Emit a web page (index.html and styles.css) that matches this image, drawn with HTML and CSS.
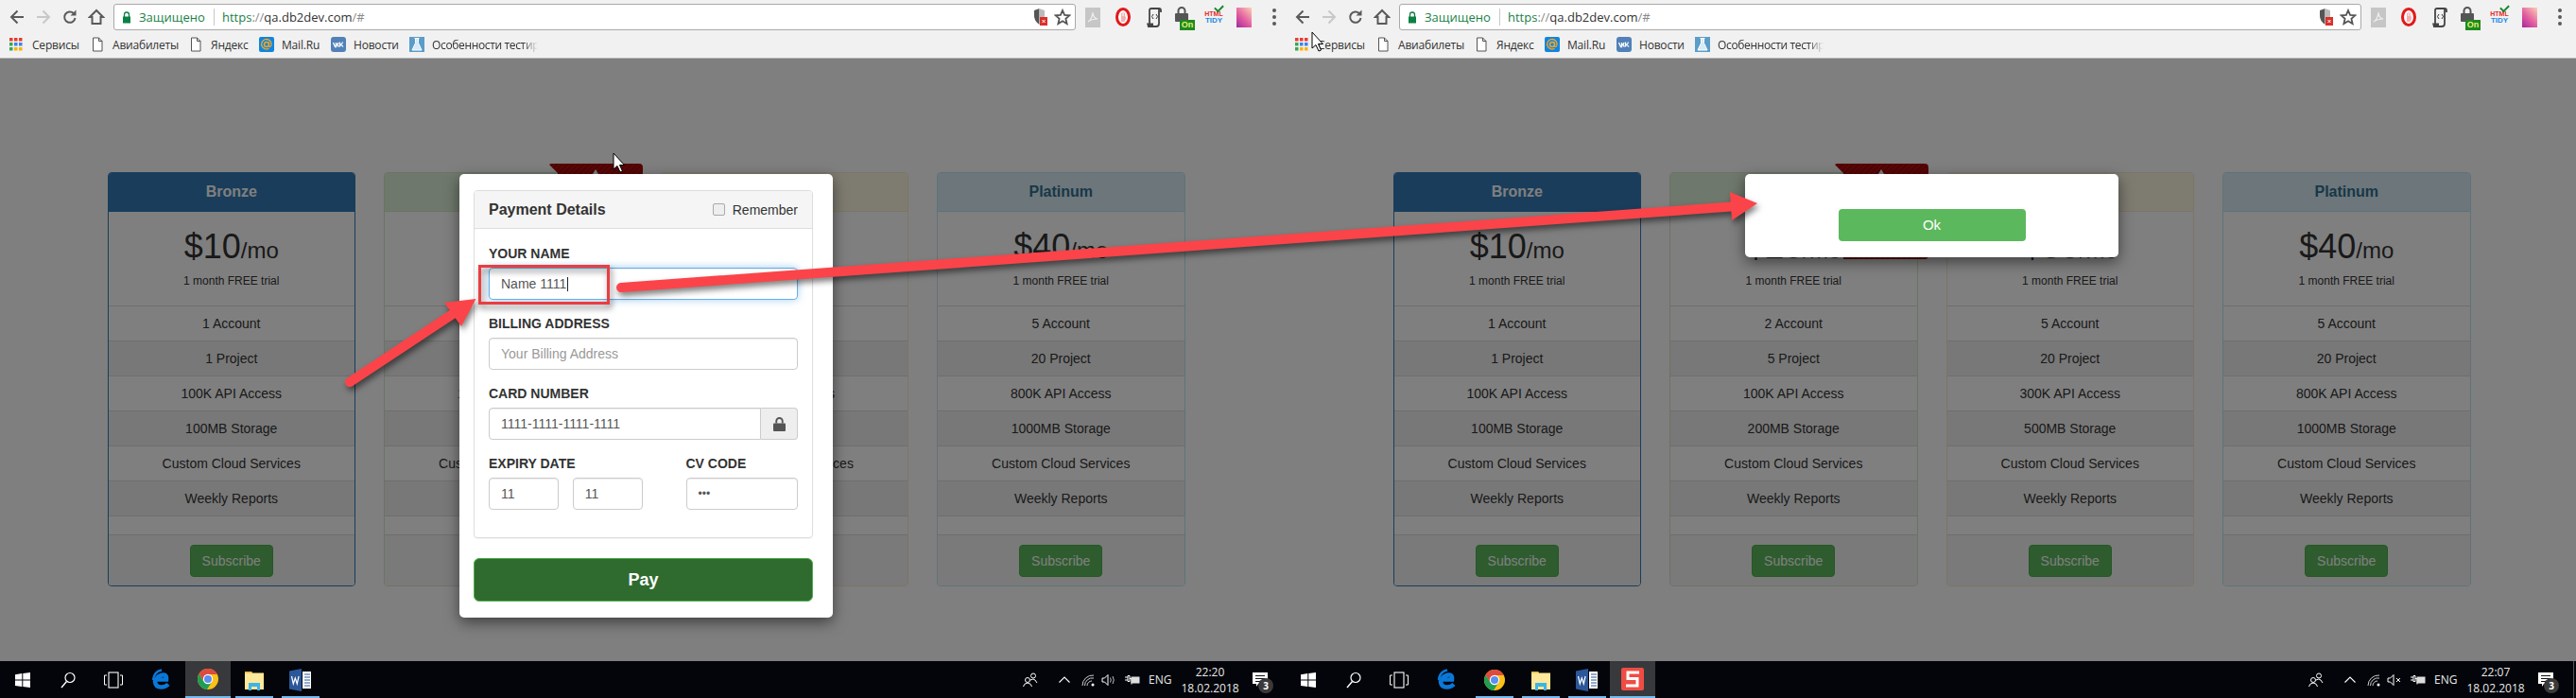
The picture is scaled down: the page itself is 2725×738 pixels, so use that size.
FILE: index.html
```html
<!DOCTYPE html>
<html lang="ru">
<head>
<meta charset="utf-8">
<title>Payment</title>
<link rel="stylesheet" href="styles.css">
</head>
<body>
<svg class="sprite" aria-hidden="true">
  <symbol id="i-back" viewBox="0 0 18 18"><path d="M16 9H3M9.500 2.500L3 9l6.500 6.500" fill="none" stroke="currentColor" stroke-width="2"/></symbol>
  <symbol id="i-reload" viewBox="0 0 18 18"><path d="M14.500 10a5.700 5.700 0 1 1-1.700-5" fill="none" stroke="currentColor" stroke-width="2"/><path d="M15.500 1.500v6h-6z" fill="currentColor"/></symbol>
  <symbol id="i-home" viewBox="0 0 18 18"><path d="M9 2L2 9h2.500v7h9V9H16z" fill="none" stroke="currentColor" stroke-width="2"/></symbol>
  <symbol id="i-lock" viewBox="0 0 10 13"><path d="M2.500 6V3.500a2.500 2.500 0 0 1 5 0V6" fill="none" stroke="currentColor" stroke-width="1.300"/><rect x="1" y="5.500" width="8" height="7" fill="currentColor"/></symbol>
  <symbol id="i-doc" viewBox="0 0 12 16"><path d="M1.500 1h6l3.500 3.500V15h-9.500zM7.500 1v3.500H11" fill="#fff" stroke="#555"/></symbol>
  <symbol id="i-grid" viewBox="0 0 14 14"><path d="M0 0h3.500v3.500H0zM5 0h3.500v3.500H5zM10 0h3.500v3.500H10z" fill="#ea3b30"/><path d="M0 5h3.500v3.500H0z" fill="#34a853"/><path d="M5 5h3.500v3.500H5zM10 5h3.500v3.500H10z" fill="#3c82ee"/><path d="M0 10h3.500v3.500H0z" fill="#34a853"/><path d="M5 10h3.500v3.500H5zM10 10h3.500v3.500H10z" fill="#fbb30a"/></symbol>
  <symbol id="i-mail" viewBox="0 0 16 16"><rect width="16" height="16" rx="2" fill="#0f86e0"/><circle cx="8" cy="8" r="2.500" fill="none" stroke="#f5a623" stroke-width="1.500"/><path d="M10.500 5.500v3.500q0 1.800 1.500 1.300 1.500-.8 1-3.300a5.200 5.200 0 1 0-2.500 5.200" fill="none" stroke="#f5a623" stroke-width="1.300"/></symbol>
  <symbol id="i-vk" viewBox="0 0 16 16"><rect width="16" height="16" rx="3" fill="#5181b8"/><path d="M2.500 6l2 4.500h1V6M5.500 8.300q2.300 0 2.300-2.300M5.500 8.300q2.300.2 2.800 2.200M9.500 5.500v5M9.500 8.300q2.500-.2 3-2.800M9.500 8.300q2.500.2 3.500 2.200" fill="none" stroke="#fff" stroke-width="1.300"/></symbol>
  <symbol id="i-flask" viewBox="0 0 16 16"><rect width="16" height="16" fill="#5b9dc9"/><path d="M5.500 1.500h5M6.500 2v4.500L3 14h10L9.500 6.500V2" fill="#d7eaf5" stroke="#fff"/></symbol>
  <symbol id="i-shield" viewBox="0 0 16 20"><path d="M6.500 1L1 3v6q0 5 5.500 9z" fill="#555"/><path d="M6.500 1l5.500 2v6q0 5-5.500 9z" fill="#bbb"/><rect x="7" y="10" width="8" height="9" fill="#d9312b"/><path d="M9.500 13l3 3M12.500 13l-3 3" stroke="#fff"/></symbol>
  <symbol id="i-star" viewBox="0 0 18 18"><path d="M9 2l2.100 4.900 5.300.4-4 3.500 1.200 5.200L9 13.200 4.400 16l1.200-5.200-4-3.500 5.300-.4z" fill="none" stroke="#555" stroke-width="1.800"/></symbol>
  <symbol id="i-pdf" viewBox="0 0 16 21"><rect width="16" height="21" fill="#c6c6c6"/><path d="M3 15q4-2 5-10 0 6 5 7-6 0-10 3z" fill="none" stroke="#efefef" stroke-width="1.200"/></symbol>
  <symbol id="i-opera" viewBox="0 0 16 20"><ellipse cx="8" cy="10" rx="6.500" ry="8.500" fill="#fff" stroke="#e2191b" stroke-width="3"/><path d="M6 15V6h1v3h.5V4.500h1V9H9V5.500h1V10l1-1v3l-1.500 3z" fill="#e2191b" opacity=".35"/></symbol>
  <symbol id="i-script" viewBox="0 0 17 21"><path d="M4 16V3q0-2 2-2h8q2 0 2 2v2M4 16q0 4-2 4h9q3 0 3-3V1" fill="none" stroke="#444" stroke-width="1.800"/><path d="M1 16.500h7V20H2z" fill="#444"/><path d="M8 7L6.500 9.500 8 12M11 7l1.500 2.500L11 12" fill="none" stroke="#333"/></symbol>
  <symbol id="i-padlock" viewBox="0 0 14 16"><path d="M3.500 7V4.500a3.500 3.500 0 0 1 7 0V7" fill="none" stroke="#555" stroke-width="2"/><rect y="7" width="14" height="9" rx="1" fill="#555"/></symbol>
  <symbol id="i-win" viewBox="0 0 16 16"><path d="M0 2.200L7.300 1.100v6.500H0zM8.300 1L16 0v7.600H8.300zM0 8.500h7.300V15L0 14zM8.300 8.500H16V16l-7.700-1.100z" fill="#fff"/></symbol>
  <symbol id="i-search" viewBox="0 0 16 18"><circle cx="10" cy="6.500" r="5" fill="none" stroke="#fff" stroke-width="1.200"/><path d="M6.500 10.500L1 17" stroke="#fff" stroke-width="1.400"/></symbol>
  <symbol id="i-tasks" viewBox="0 0 20 18"><rect x="5" y="1" width="10" height="16" fill="none" stroke="#fff" stroke-width="1.100"/><path d="M3 4H.5v10H3M17 4h2.500v10H17" fill="none" stroke="#fff"/></symbol>
  <symbol id="i-edge" viewBox="0 0 20 24"><path d="M18 16.500q-3 3-7.500 3-6 0-6.500-6 3-7 9-7 3.500 0 3 5H3.500" fill="none" stroke="#0a78d7" stroke-width="4.500"/><path d="M2 12Q3 3 11 1.500" fill="none" stroke="#0a78d7" stroke-width="2.500"/></symbol>
  <symbol id="i-chrome" viewBox="0 0 24 24"><circle cx="12" cy="12" r="11" fill="#fbc116"/><path d="M12 1a11 11 0 0 0-9.500 5.500L7 14l5-7h10A11 11 0 0 0 12 1z" fill="#dd4b3e"/><path d="M2.500 6.500A11 11 0 0 0 11 23l5-8-9 -1z" fill="#1f9d55"/><circle cx="12" cy="12" r="5.200" fill="#fff"/><circle cx="12" cy="12" r="4" fill="#5b8ff0"/></symbol>
  <symbol id="i-folder" viewBox="0 0 22 24"><path d="M1 3h7l1 1.500h12V22H1z" fill="#ffe89a"/><path d="M1 3h7l1 1.500H1z" fill="#e5b83a"/><path d="M5 15h12v8h-3v-4H8v4H5z" fill="#3eb4e8"/></symbol>
  <symbol id="i-word" viewBox="0 0 24 24"><path d="M14 3h9v18h-9z" fill="#fff"/><path d="M16 6h6M16 9h6M16 12h6M16 15h6M16 18h6" stroke="#2b579a"/><path d="M0 2.500L13 0v24L0 21.500z" fill="#2b579a"/><path d="M2.500 8l1.800 8 2-6 2 6 1.800-8" fill="none" stroke="#fff" stroke-width="1.200"/></symbol>
  <symbol id="i-snag" viewBox="0 0 24 24"><rect width="24" height="24" rx="2" fill="#ef4c43"/><path d="M19 5H7v6.500h10V19H5" fill="none" stroke="#fff" stroke-width="3"/></symbol>
  <symbol id="i-people" viewBox="0 0 16 16"><circle cx="5" cy="8" r="2.500" fill="none" stroke="#fff"/><path d="M.5 15q.5-3.500 4.500-4 4 .5 4.500 4" fill="none" stroke="#fff"/><circle cx="11" cy="3.500" r="2.500" fill="none" stroke="#fff"/><path d="M8 8q3-2 5 0l2 3" fill="none" stroke="#fff"/></symbol>
  <symbol id="i-caret" viewBox="0 0 12 7"><path d="M.5 6.500L6 1l5.500 5.500" fill="none" stroke="#fff" stroke-width="1.100"/></symbol>
  <symbol id="i-wifi" viewBox="0 0 14 14"><path d="M1 13A11 11 0 0 1 13 2M3.500 13A8 8 0 0 1 13 5M6 13a5 5 0 0 1 5-5" fill="none" stroke="#ccc" stroke-width="1"/><circle cx="12" cy="12" r="1.500" fill="#fff"/></symbol>
  <symbol id="i-vol" viewBox="0 0 16 14"><path d="M1 5h2.500L7 1.500v11L3.500 9H1z" fill="none" stroke="#fff"/><path d="M9.500 4.500q1.500 2.500 0 5M12 3q2.500 4 0 8" fill="none" stroke="#bbb"/></symbol>
  <symbol id="i-mute" viewBox="0 0 16 14"><path d="M1 5h2.500L7 1.500v11L3.500 9H1z" fill="none" stroke="#fff"/><path d="M10 5l4 4M14 5l-4 4" stroke="#fff"/></symbol>
  <symbol id="i-power" viewBox="0 0 16 12"><path d="M0 3h3M0 6h3M3 1.500h2v6H3zM5 4.500h2v6" fill="none" stroke="#fff"/><rect x="6.500" y="2.500" width="9" height="7" fill="#ddd"/></symbol>
  <symbol id="i-note" viewBox="0 0 16 16"><path d="M0 0h16v12H6l-2 3v-3H0z" fill="#fff"/><path d="M3 3.500h10M3 6.500h10M3 9.500h6" stroke="#111"/></symbol>
</svg>

<main class="desktop">

<section class="window window-left">
  <header class="chrome">
    <div class="toolbar">
      <span class="nav"><svg class="ico18 dark"><use href="#i-back"/></svg></span>
      <span class="nav"><svg class="ico18 light flip"><use href="#i-back"/></svg></span>
      <span class="nav"><svg class="ico18 dark"><use href="#i-reload"/></svg></span>
      <span class="nav"><svg class="ico18 dark"><use href="#i-home"/></svg></span>
      <div class="address">
        <svg class="lock-green"><use href="#i-lock"/></svg>
        <span class="secure">Защищено</span>
        <span class="addr-sep"></span>
        <span class="url"><span class="scheme">https</span><span class="dim">://</span>qa.db2dev.com<span class="dim">/#</span></span>
        <svg class="addr-shield"><use href="#i-shield"/></svg>
        <svg class="addr-star"><use href="#i-star"/></svg>
      </div>
      <div class="exts">
        <span class="ext"><svg class="ext-pdf"><use href="#i-pdf"/></svg></span>
        <span class="ext"><svg class="ext-opera"><use href="#i-opera"/></svg></span>
        <span class="ext"><svg class="ext-script"><use href="#i-script"/></svg></span>
        <span class="ext"><svg class="ext-padlock"><use href="#i-padlock"/></svg><b class="badge-on">On</b></span>
        <span class="ext"><span class="tidy"><i class="tidy-a">HTML</i><i class="tidy-b">TIDY</i></span></span>
        <span class="ext"><span class="pink"></span></span>
        <span class="ext-menu"><i></i><i></i><i></i></span>
      </div>
    </div>
    <nav class="bookmarks">
      <a class="bm"><svg class="ico-grid"><use href="#i-grid"/></svg>Сервисы</a>
      <a class="bm"><svg class="ico-doc"><use href="#i-doc"/></svg>Авиабилеты</a>
      <a class="bm"><svg class="ico-doc"><use href="#i-doc"/></svg>Яндекс</a>
      <a class="bm"><svg class="ico16"><use href="#i-mail"/></svg>Mail.Ru</a>
      <a class="bm"><svg class="ico16"><use href="#i-vk"/></svg>Новости</a>
      <a class="bm bm-fade"><svg class="ico16"><use href="#i-flask"/></svg>Особенности тестир</a>
    </nav>
  </header>
  <div class="page">
    <div class="plans">
      <article class="plan plan-bronze">
        <h3 class="plan-head">Bronze</h3>
        <div class="price"><span class="amount">$10</span><span class="per">/mo</span><small class="trial">1 month FREE trial</small></div>
        <ul class="feats"><li>1 Account</li><li>1 Project</li><li>100K API Access</li><li>100MB Storage</li><li>Custom Cloud Services</li><li>Weekly Reports</li><li class="blank"></li></ul>
        <div class="plan-foot"><span class="subscribe">Subscribe</span></div>
      </article>
      <article class="plan plan-silver">
        <span class="ribbon"><i class="ribbon-tip"></i></span>
        <h3 class="plan-head">Silver</h3>
        <div class="price"><span class="amount">$20</span><span class="per">/mo</span><small class="trial">1 month FREE trial</small></div>
        <ul class="feats"><li>2 Account</li><li>5 Project</li><li>100K API Access</li><li>200MB Storage</li><li>Custom Cloud Services</li><li>Weekly Reports</li><li class="blank"></li></ul>
        <div class="plan-foot"><span class="subscribe">Subscribe</span></div>
      </article>
      <article class="plan plan-gold">
        <h3 class="plan-head">Gold</h3>
        <div class="price"><span class="amount">$30</span><span class="per">/mo</span><small class="trial">1 month FREE trial</small></div>
        <ul class="feats"><li>5 Account</li><li>20 Project</li><li>300K API Access</li><li>500MB Storage</li><li>Custom Cloud Services</li><li>Weekly Reports</li><li class="blank"></li></ul>
        <div class="plan-foot"><span class="subscribe">Subscribe</span></div>
      </article>
      <article class="plan plan-platinum">
        <h3 class="plan-head">Platinum</h3>
        <div class="price"><span class="amount">$40</span><span class="per">/mo</span><small class="trial">1 month FREE trial</small></div>
        <ul class="feats"><li>5 Account</li><li>20 Project</li><li>800K API Access</li><li>1000MB Storage</li><li>Custom Cloud Services</li><li>Weekly Reports</li><li class="blank"></li></ul>
        <div class="plan-foot"><span class="subscribe">Subscribe</span></div>
      </article>
    </div>
    <div class="backdrop"></div>
    <div class="modal modal-pay">
      <div class="panel">
        <div class="panel-head">
          <h4 class="panel-title">Payment Details</h4>
          <span class="remember"><i class="check"></i>Remember</span>
        </div>
        <div class="panel-body">
          <div class="label">Your Name</div>
          <div class="field field-focus">Name 1111<i class="caret"></i></div>
          <div class="label">Billing Address</div>
          <div class="field field-empty">Your Billing Address</div>
          <div class="label">Card Number</div>
          <div class="group">
            <div class="field field-grow">1111-1111-1111-1111</div>
            <span class="addon"><svg class="addon-lock"><use href="#i-padlock"/></svg></span>
          </div>
          <div class="split">
            <div class="split-date">
              <div class="label">Expiry Date</div>
              <div class="date-pair"><div class="field">11</div><div class="field">11</div></div>
            </div>
            <div class="split-cv">
              <div class="label">CV Code</div>
              <div class="field field-dots">•••</div>
            </div>
          </div>
        </div>
      </div>
      <div class="pay">Pay</div>
    </div>
  </div>
  <footer class="taskbar">
    <span class="tb"><svg class="tb-win"><use href="#i-win"/></svg></span>
    <span class="tb"><svg class="tb-search"><use href="#i-search"/></svg></span>
    <span class="tb"><svg class="tb-tasks"><use href="#i-tasks"/></svg></span>
    <span class="tb tb-edge"><svg class="tb-app"><use href="#i-edge"/></svg></span>
    <span class="tb tb-active"><svg class="tb-app"><use href="#i-chrome"/></svg></span>
    <span class="tb tb-open"><svg class="tb-app"><use href="#i-folder"/></svg></span>
    <span class="tb tb-open"><svg class="tb-app"><use href="#i-word"/></svg></span>
    <div class="tray">
      <svg class="tr-people"><use href="#i-people"/></svg>
      <svg class="tr-caret"><use href="#i-caret"/></svg>
      <svg class="tr-wifi"><use href="#i-wifi"/></svg>
      <svg class="tr-vol"><use href="#i-vol"/></svg>
      <svg class="tr-power"><use href="#i-power"/></svg>
      <span class="tr-lang">ENG</span>
      <span class="tr-clock"><span>22:20</span><span>18.02.2018</span></span>
      <span class="tr-note"><svg class="tr-note-ico"><use href="#i-note"/></svg><b class="tr-badge">3</b></span>
    </div>
  </footer>
</section>

<section class="window window-right">
  <header class="chrome">
    <div class="toolbar">
      <span class="nav"><svg class="ico18 dark"><use href="#i-back"/></svg></span>
      <span class="nav"><svg class="ico18 light flip"><use href="#i-back"/></svg></span>
      <span class="nav"><svg class="ico18 dark"><use href="#i-reload"/></svg></span>
      <span class="nav"><svg class="ico18 dark"><use href="#i-home"/></svg></span>
      <div class="address">
        <svg class="lock-green"><use href="#i-lock"/></svg>
        <span class="secure">Защищено</span>
        <span class="addr-sep"></span>
        <span class="url"><span class="scheme">https</span><span class="dim">://</span>qa.db2dev.com<span class="dim">/#</span></span>
        <svg class="addr-shield"><use href="#i-shield"/></svg>
        <svg class="addr-star"><use href="#i-star"/></svg>
      </div>
      <div class="exts">
        <span class="ext"><svg class="ext-pdf"><use href="#i-pdf"/></svg></span>
        <span class="ext"><svg class="ext-opera"><use href="#i-opera"/></svg></span>
        <span class="ext"><svg class="ext-script"><use href="#i-script"/></svg></span>
        <span class="ext"><svg class="ext-padlock"><use href="#i-padlock"/></svg><b class="badge-on">On</b></span>
        <span class="ext"><span class="tidy"><i class="tidy-a">HTML</i><i class="tidy-b">TIDY</i></span></span>
        <span class="ext"><span class="pink"></span></span>
        <span class="ext-menu"><i></i><i></i><i></i></span>
      </div>
    </div>
    <nav class="bookmarks">
      <a class="bm"><svg class="ico-grid"><use href="#i-grid"/></svg>Сервисы</a>
      <a class="bm"><svg class="ico-doc"><use href="#i-doc"/></svg>Авиабилеты</a>
      <a class="bm"><svg class="ico-doc"><use href="#i-doc"/></svg>Яндекс</a>
      <a class="bm"><svg class="ico16"><use href="#i-mail"/></svg>Mail.Ru</a>
      <a class="bm"><svg class="ico16"><use href="#i-vk"/></svg>Новости</a>
      <a class="bm bm-fade"><svg class="ico16"><use href="#i-flask"/></svg>Особенности тестир</a>
    </nav>
  </header>
  <div class="page">
    <div class="plans">
      <article class="plan plan-bronze">
        <h3 class="plan-head">Bronze</h3>
        <div class="price"><span class="amount">$10</span><span class="per">/mo</span><small class="trial">1 month FREE trial</small></div>
        <ul class="feats"><li>1 Account</li><li>1 Project</li><li>100K API Access</li><li>100MB Storage</li><li>Custom Cloud Services</li><li>Weekly Reports</li><li class="blank"></li></ul>
        <div class="plan-foot"><span class="subscribe">Subscribe</span></div>
      </article>
      <article class="plan plan-silver">
        <span class="ribbon"><i class="ribbon-tip"></i></span>
        <h3 class="plan-head">Silver</h3>
        <div class="price"><span class="amount">$20</span><span class="per">/mo</span><small class="trial">1 month FREE trial</small></div>
        <ul class="feats"><li>2 Account</li><li>5 Project</li><li>100K API Access</li><li>200MB Storage</li><li>Custom Cloud Services</li><li>Weekly Reports</li><li class="blank"></li></ul>
        <div class="plan-foot"><span class="subscribe">Subscribe</span></div>
      </article>
      <article class="plan plan-gold">
        <h3 class="plan-head">Gold</h3>
        <div class="price"><span class="amount">$30</span><span class="per">/mo</span><small class="trial">1 month FREE trial</small></div>
        <ul class="feats"><li>5 Account</li><li>20 Project</li><li>300K API Access</li><li>500MB Storage</li><li>Custom Cloud Services</li><li>Weekly Reports</li><li class="blank"></li></ul>
        <div class="plan-foot"><span class="subscribe">Subscribe</span></div>
      </article>
      <article class="plan plan-platinum">
        <h3 class="plan-head">Platinum</h3>
        <div class="price"><span class="amount">$40</span><span class="per">/mo</span><small class="trial">1 month FREE trial</small></div>
        <ul class="feats"><li>5 Account</li><li>20 Project</li><li>800K API Access</li><li>1000MB Storage</li><li>Custom Cloud Services</li><li>Weekly Reports</li><li class="blank"></li></ul>
        <div class="plan-foot"><span class="subscribe">Subscribe</span></div>
      </article>
    </div>
    <div class="backdrop"></div>
    <div class="modal modal-ok">
      <div class="ok">Ok</div>
    </div>
  </div>
  <footer class="taskbar">
    <span class="tb"><svg class="tb-win"><use href="#i-win"/></svg></span>
    <span class="tb"><svg class="tb-search"><use href="#i-search"/></svg></span>
    <span class="tb"><svg class="tb-tasks"><use href="#i-tasks"/></svg></span>
    <span class="tb tb-edge"><svg class="tb-app"><use href="#i-edge"/></svg></span>
    <span class="tb tb-open"><svg class="tb-app"><use href="#i-chrome"/></svg></span>
    <span class="tb tb-open"><svg class="tb-app"><use href="#i-folder"/></svg></span>
    <span class="tb tb-open"><svg class="tb-app"><use href="#i-word"/></svg></span>
    <span class="tb tb-active"><svg class="tb-app"><use href="#i-snag"/></svg></span>
    <div class="tray">
      <svg class="tr-people"><use href="#i-people"/></svg>
      <svg class="tr-caret"><use href="#i-caret"/></svg>
      <svg class="tr-wifi"><use href="#i-wifi"/></svg>
      <svg class="tr-vol"><use href="#i-mute"/></svg>
      <svg class="tr-power"><use href="#i-power"/></svg>
      <span class="tr-lang">ENG</span>
      <span class="tr-clock"><span>22:07</span><span>18.02.2018</span></span>
      <span class="tr-note"><svg class="tr-note-ico"><use href="#i-note"/></svg><b class="tr-badge">3</b></span>
    </div>
    <span class="desk-edge"></span>
  </footer>
</section>

<svg class="annot" viewBox="0 0 2725 738" aria-hidden="true">
  <g class="annot-shadow">
    <path class="arrow-line" d="M370 404L482 330"/>
    <path class="arrow-head" d="M503.500 316L470 320 488 345z"/>
    <rect class="annot-box" x="507.500" y="281.500" width="136" height="39"/>
    <path class="arrow-line" d="M657 304L1838 218"/>
    <path class="arrow-head" d="M1859 215L1830 203 1832 233z"/>
  </g>
  <path class="cursor" d="M649 162v17l4-3.500 3 6.500 2.500-1-3-6.500 5 0z"/>
  <path class="cursor" d="M1388 34v17l4-3.500 3 6.500 2.500-1-3-6.500 5 0z"/>
</svg>

</main>
</body>
</html>
```

FILE: styles.css
```css
* { box-sizing: border-box; }
html, body { margin: 0; padding: 0; }
body { font-family: "Liberation Sans", Arial, sans-serif; font-size: 14px; color: #333; background: #fff; overflow: hidden; }
.sprite { display: none; }

.desktop { position: relative; display: flex; width: 2725px; height: 738px; overflow: hidden; }
.window { display: flex; flex-direction: column; flex: none; height: 738px; }
.window-left { width: 1360px; }
.window-right { width: 1365px; }

/* browser chrome */
.chrome { flex: none; height: 62px; background: #f1f1f1; border-bottom: 1px solid #b5b5b5; font-family: "Open Sans", "Noto Sans", sans-serif; }
.toolbar { display: flex; align-items: center; height: 36px; padding-left: 4px; padding-top: 0; }
.nav { display: flex; align-items: center; justify-content: center; width: 28px; height: 36px; }
.ico18 { width: 18px; height: 18px; }
.dark { color: #5a5a5a; }
.light { color: #c8c8c8; }
.flip { transform: scaleX(-1); }
.address { position: relative; display: flex; align-items: center; flex: none; width: 1018px; height: 28px; margin-left: 4px; background: #fff; border: 1px solid #a9a9a9; border-radius: 3px; font-size: 13px; }
.lock-green { width: 10px; height: 13px; margin-left: 8px; color: #0b8043; flex: none; }
.secure { margin-left: 8px; color: #1a7f47; width: 70px; white-space: nowrap; }
.addr-sep { width: 1px; height: 18px; margin-left: 9px; background: #c8c8c8; }
.url { margin-left: 8px; color: #333; white-space: nowrap; }
.scheme { color: #1a7f47; }
.dim { color: #8a8a8a; }
.addr-shield { position: absolute; left: 972px; top: 3px; width: 16px; height: 20px; }
.addr-star { position: absolute; left: 994px; top: 4px; width: 18px; height: 18px; }
.exts { display: flex; align-items: center; margin-left: 2px; }
.ext { position: relative; display: flex; align-items: center; justify-content: center; width: 32px; height: 36px; }
.ext-pdf { width: 16px; height: 21px; }
.ext-opera { width: 16px; height: 20px; }
.ext-script { width: 17px; height: 21px; }
.ext-padlock { width: 14px; height: 16px; margin: -6px 4px 0 0; }
.badge-on { position: absolute; left: 12px; top: 21px; width: 16px; height: 11px; background: #1e8a1e; color: #e4f07a; font: 700 9px/11px "Liberation Sans", sans-serif; text-align: center; }
.tidy { display: flex; flex-direction: column; align-items: center; font: 700 7px/7px "Liberation Sans", sans-serif; }
.tidy i { font-style: normal; }
.tidy-a { color: #e8262a; position: relative; }
.tidy-a::after { content: ""; position: absolute; right: 0; top: -6px; width: 7px; height: 4px; border-left: 2px solid #138a2d; border-bottom: 2px solid #138a2d; transform: rotate(-45deg); }
.tidy-b { color: #1e88e5; font-size: 8px; }
.pink { width: 16px; height: 21px; background: linear-gradient(45deg, #a2289c, #e35da0 45%, #fbd0b4); }
.ext-menu { display: flex; flex-direction: column; justify-content: center; gap: 3px; width: 28px; height: 36px; padding-left: 14px; }
.ext-menu i { width: 4px; height: 4px; border-radius: 50%; background: #5a5a5a; }

.bookmarks { display: grid; grid-template-columns: 86px 104px 75px 76px 83px 136px; height: 22px; padding-left: 9px; font-size: 12px; color: #333; letter-spacing: -.2px; }
.bm { display: flex; align-items: center; gap: 8px; white-space: nowrap; overflow: hidden; }
.bm-fade { -webkit-mask-image: linear-gradient(90deg, #000 88%, transparent); mask-image: linear-gradient(90deg, #000 88%, transparent); letter-spacing: -.35px; }
.ico16 { width: 16px; height: 16px; flex: none; }
.ico-grid { width: 14px; height: 14px; margin: 0 2px 0 1px; flex: none; }
.ico-doc { width: 12px; height: 16px; margin: 0 2px; flex: none; }

/* page */
.page { position: relative; flex: 1; background: #fff; overflow: hidden; }
.plans { display: grid; grid-template-columns: repeat(4, 262.500px); gap: 30px; padding: 120px 0 0 113.500px; }
.plan { position: relative; height: 438px; border: 1px solid #ddd; border-radius: 4px; background: #fff; display: flex; flex-direction: column; }
.plan-head { margin: 0; height: 41px; flex: none; border-bottom: 1px solid transparent; border-radius: 3px 3px 0 0; font-size: 16px; line-height: 40px; font-weight: 700; text-align: center; }
.plan-bronze { border-color: #337ab7; }
.plan-bronze .plan-head { background: #337ab7; color: #fff; }
.plan-silver { border-color: #d6e9c6; }
.plan-silver .plan-head { background: #dff0d8; color: #3c763d; border-color: #d6e9c6; }
.plan-gold { border-color: #faebcc; }
.plan-gold .plan-head { background: #fcf8e3; color: #8a6d3b; border-color: #faebcc; }
.plan-platinum { border-color: #bce8f1; }
.plan-platinum .plan-head { background: #d9edf7; color: #31708f; border-color: #bce8f1; }
.price { height: 99px; flex: none; padding-top: 17px; text-align: center; }
.amount { font-size: 36px; line-height: 40px; }
.per { font-size: 24px; line-height: 40px; }
.trial { display: block; margin-top: 4px; font-size: 12px; line-height: 17px; }
.feats { margin: 0; padding: 0; list-style: none; text-align: center; }
.feats li { height: 37px; border-top: 1px solid #ddd; line-height: 37px; }
.feats li:nth-child(even) { background: #f1f1f1; }
.feats li.blank { height: 20px; background: #fff; }
.plan-foot { flex: 1; display: flex; justify-content: center; align-items: flex-start; padding-top: 10px; background: #f5f5f5; border-top: 1px solid #ddd; border-radius: 0 0 3px 3px; }
.subscribe { width: 88px; height: 34px; background: #5cb85c; border: 1px solid #4cae4c; border-radius: 4px; color: #fff; line-height: 32px; text-align: center; }

.ribbon { position: absolute; left: 173px; top: -10px; width: 100px; height: 101px; border-radius: 4px; background: repeating-linear-gradient(135deg, #b40e0e 0 2px, #a00808 2px 4px); clip-path: polygon(0 0, 100% 0, 100% 100%, 10px 100%, 10px 10px); }
.ribbon-tip { position: absolute; left: 47px; top: 6px; border-style: solid; border-width: 0 3px 5px; border-color: transparent transparent #fff; }

.backdrop { position: absolute; inset: 0; background: rgba(0, 0, 0, .5); }
.modal { position: absolute; left: 486px; top: 122px; width: 395px; background: #fff; border-radius: 5px; box-shadow: 0 5px 15px rgba(0, 0, 0, .5); }
.modal-pay { height: 469px; padding: 17px 21px 17px 15px; }
.modal-ok { height: 88px; padding-top: 37px; display: flex; justify-content: center; align-items: flex-start; }

.panel { height: 368px; border: 1px solid #ddd; border-radius: 4px; box-shadow: 0 1px 1px rgba(0, 0, 0, .05); }
.panel-head { display: flex; align-items: center; justify-content: space-between; height: 40px; padding: 0 15px; background: #f5f5f5; border-bottom: 1px solid #ddd; border-radius: 3px 3px 0 0; }
.panel-title { margin: 0; font-size: 16px; font-weight: 700; }
.remember { display: flex; align-items: center; gap: 8px; }
.check { width: 13px; height: 13px; border: 1px solid #aaa; border-radius: 2px; background: #eee; }
.panel-body { padding: 16px 15px 15px; }
.label { height: 20px; margin-bottom: 5px; font-weight: 700; line-height: 20px; text-transform: uppercase; }
.field { height: 34px; margin-bottom: 15px; padding: 0 12px; border: 1px solid #ccc; border-radius: 4px; color: #555; line-height: 32px; box-shadow: inset 0 1px 1px rgba(0, 0, 0, .075); }
.field-focus { border-color: #66afe9; box-shadow: inset 0 1px 1px rgba(0, 0, 0, .075), 0 0 8px rgba(102, 175, 233, .6); }
.caret { display: inline-block; width: 1px; height: 15px; margin-left: 1px; background: #222; vertical-align: -3px; }
.field-empty { color: #999; }
.group { display: flex; height: 34px; margin-bottom: 15px; }
.field-grow { flex: 1; margin: 0; border-radius: 4px 0 0 4px; }
.addon { display: flex; align-items: center; justify-content: center; width: 39px; background: #eee; border: 1px solid #ccc; border-left: 0; border-radius: 0 4px 4px 0; }
.addon-lock { width: 13px; height: 15px; }
.split { display: flex; gap: 46px; }
.split-date { width: 162.500px; }
.split-cv { flex: 1; }
.date-pair { display: flex; gap: 15px; }
.date-pair .field { flex: 1; margin: 0; }
.field-dots { margin: 0; font-size: 12px; }
.pay { height: 46px; margin-top: 21px; background: #2f6b2f; border: 1px solid #4cae4c; border-radius: 6px; color: #fff; font-size: 18px; font-weight: 700; line-height: 44px; text-align: center; }
.ok { width: 198px; height: 34px; background: #5cb85c; border-radius: 4px; color: #fff; line-height: 34px; text-align: center; font-size: 15px; }

/* taskbar */
.taskbar { display: flex; flex: none; height: 39px; background: #03050a; font-family: "Open Sans", "Noto Sans", sans-serif; color: #e8e8e8; font-size: 12px; }
.tb { display: flex; align-items: center; justify-content: center; position: relative; width: 48px; height: 39px; flex: none; }
.tb-edge { width: 52px; }
.tb-active { background: #37393c; border-bottom: 2px solid #76b9ed; }
.tb-open { margin-left: 1px; }
.tb-open::after { content: ""; position: absolute; left: 4px; right: 4px; bottom: 0; height: 2px; background: #76b9ed; }
.tb-win { width: 16px; height: 16px; }
.tb-search { width: 16px; height: 18px; }
.tb-tasks { width: 20px; height: 18px; }
.tb-app { width: 24px; height: 24px; }
.tray { display: flex; align-items: center; margin-left: auto; padding-right: 19px; }
.tr-people { width: 16px; height: 16px; }
.tr-caret { width: 12px; height: 7px; margin-left: 22px; }
.tr-wifi { width: 14px; height: 14px; margin-left: 12px; }
.tr-vol { width: 16px; height: 14px; margin-left: 7px; }
.tr-power { width: 16px; height: 12px; margin-left: 9px; }
.tr-lang { width: 24px; margin-left: 9px; white-space: nowrap; }
.tr-clock { display: flex; flex-direction: column; align-items: center; width: 60px; margin-left: 11px; line-height: 17px; white-space: nowrap; }
.tr-note { position: relative; width: 16px; height: 16px; margin-left: 15px; }
.tr-note-ico { width: 16px; height: 16px; display: block; }
.tr-badge { position: absolute; left: 6px; top: 6px; width: 16px; height: 16px; border-radius: 50%; background: #3a3a3a; color: #fff; font: 700 10px/16px "Open Sans", sans-serif; text-align: center; }
.desk-edge { flex: none; width: 5px; position: relative; }
.desk-edge::after { content: ""; position: absolute; left: 2px; top: 0; bottom: 0; width: 1px; background: #555; }

/* annotations lying over the screenshot */
.annot { position: absolute; left: 0; top: 0; width: 2725px; height: 738px; pointer-events: none; }
.annot-shadow { filter: drop-shadow(2px 4px 3px rgba(0, 0, 0, .5)); }
.arrow-line { fill: none; stroke: #fb4449; stroke-width: 10; stroke-linecap: round; }
.arrow-head { fill: #fb4449; }
.annot-box { fill: none; stroke: #ea3d42; stroke-width: 3; }
.cursor { fill: #fff; stroke: #000; stroke-width: 1; }
```
